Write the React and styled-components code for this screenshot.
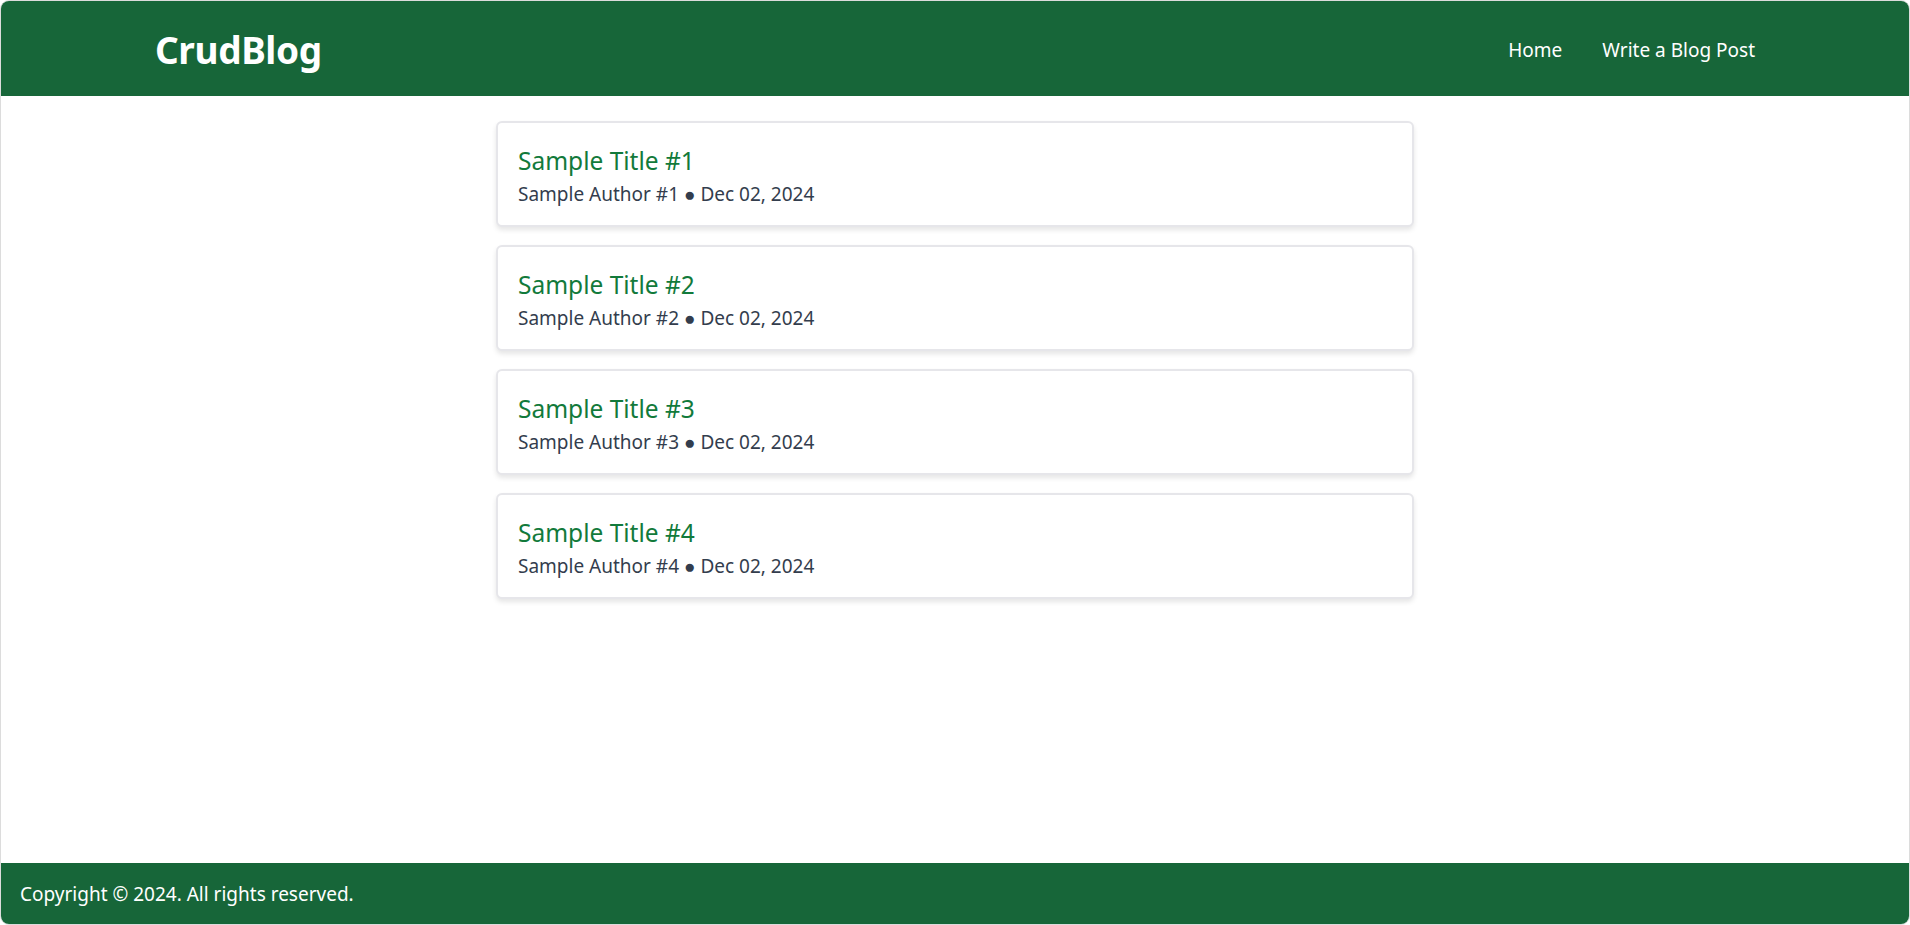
import styled, { createGlobalStyle } from "styled-components";

const GlobalStyle = createGlobalStyle`
  html, body {
    margin: 0;
    padding: 0;
    background: #ffffff;
  }
  body {
    font-family: "Noto Sans", "Open Sans", sans-serif;
  }
  * {
    box-sizing: border-box;
  }
`;

const Page = styled.div`
  display: flex;
  flex-direction: column;
  height: 925px;
  border: 1px solid #dcdcdc;
  border-radius: 9px;
  overflow: hidden;
  background: #ffffff;
`;

const Header = styled.header`
  flex: 0 0 95px;
  background-color: #176639;
  display: flex;
  align-items: center;
`;

const HeaderInner = styled.div`
  width: 1600px;
  margin: 0 auto;
  display: flex;
  align-items: center;
  justify-content: space-between;
`;

const Logo = styled.a`
  color: #ffffff;
  font-size: 37px;
  font-weight: 700;
  letter-spacing: -0.4px;
  text-decoration: none;
  margin-top: 1px;
`;

const Nav = styled.nav`
  display: flex;
  gap: 40px;
`;

const NavLink = styled.a`
  color: #ffffff;
  font-size: 19px;
  text-decoration: none;
  margin-top: 2px;
  cursor: pointer;
`;

const Main = styled.main`
  flex: 1;
  display: flex;
  flex-direction: column;
  align-items: center;
  gap: 18px;
  padding-top: 25px;
`;

const Card = styled.article`
  width: 918px;
  height: 106px;
  padding: 22px 20px 0;
  background: #ffffff;
  border: 2px solid #e6e6ea;
  border-radius: 6px;
  box-shadow: 0 3px 5px rgba(0, 0, 0, 0.1);
`;

const Title = styled.h2`
  margin: 0;
  font-size: 24.5px;
  font-weight: 400;
  color: #127a3b;
  line-height: 32px;
`;

const Meta = styled.p`
  margin: 4px 0 0;
  font-size: 19px;
  color: #333d4d;
  line-height: 26px;
`;

const Footer = styled.footer`
  flex: 0 0 61px;
  background-color: #176639;
  color: #ffffff;
  display: flex;
  align-items: center;
  padding: 1px 19px 0;
  font-size: 19px;
`;

const posts = [1, 2, 3, 4].map((n) => ({
  id: n,
  title: `Sample Title #${n}`,
  author: `Sample Author #${n}`,
  date: "Dec 02, 2024"
}));

const App = () => {
  return (
    <>
      <GlobalStyle />
      <Page>
        <Header>
          <HeaderInner>
            <Logo>CrudBlog</Logo>
            <Nav>
              <NavLink>Home</NavLink>
              <NavLink>Write a Blog Post</NavLink>
            </Nav>
          </HeaderInner>
        </Header>
        <Main>
          {posts.map((post) => (
            <Card key={post.id}>
              <Title>{post.title}</Title>
              <Meta>
                {post.author} ● {post.date}
              </Meta>
            </Card>
          ))}
        </Main>
        <Footer>Copyright © 2024. All rights reserved.</Footer>
      </Page>
    </>
  );
};

export default App;
